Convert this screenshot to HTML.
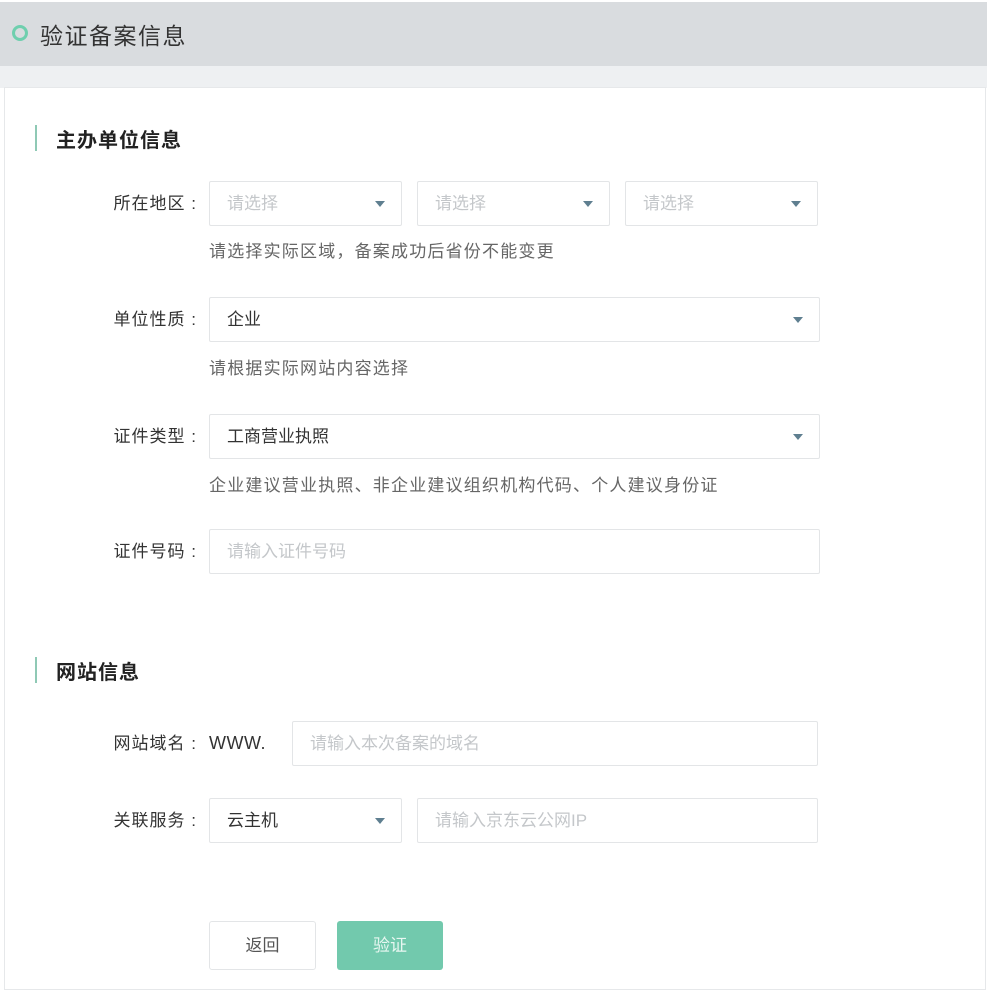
<!DOCTYPE html>
<html><head><meta charset="utf-8"><style>
*{margin:0;padding:0;box-sizing:border-box}
body{width:988px;height:996px;background:#fff;position:relative;overflow:hidden;font-family:"Liberation Sans","Noto Sans CJK SC",sans-serif;color:#333}
.a{position:absolute}
.hdr{left:0;top:2px;width:987px;height:64px;background:#d9dcdf}
.band{left:0;top:66px;width:987px;height:22px;background:#eef0f2}
.card{left:4px;top:87px;width:982px;height:903px;background:#fff;border:1px solid #e6e8ea}
.lbl{font-size:17px;color:#333;width:122px;text-align:right;line-height:45px;height:45px;letter-spacing:1px}
.box{border:1px solid #e3e5e7;background:#fff;height:45px;border-radius:2px;font-size:17px;line-height:43px;padding-left:17px}
.ph{color:#c4c7ca}
.tri{position:absolute;right:16px;top:19px;width:0;height:0;border-left:5px solid transparent;border-right:5px solid transparent;border-top:6px solid #5f7f90}
.hint{font-size:17px;color:#666;letter-spacing:1.2px}
.sec{font-size:20px;font-weight:bold;color:#222;letter-spacing:1px}
.bar{width:2px;height:26px;background:#8fc9b5}
</style></head><body>
<div class="a hdr"></div>
<div class="a band"></div>
<div class="a card"></div>
<div class="a" style="left:12px;top:25px;width:16px;height:16px;border:3px solid #6fcfae;border-radius:50%"></div>
<div class="a" style="left:40px;top:17px;font-size:23px;color:#333;letter-spacing:1.5px">验证备案信息</div>

<div class="a bar" style="left:35px;top:125px"></div>
<div class="a sec" style="left:56px;top:124px">主办单位信息</div>

<div class="a lbl" style="left:75px;top:181px">所在地区 :</div>
<div class="a box" style="left:209px;top:181px;width:193px"><span class="ph">请选择</span><i class="tri"></i></div>
<div class="a box" style="left:417px;top:181px;width:193px"><span class="ph">请选择</span><i class="tri"></i></div>
<div class="a box" style="left:625px;top:181px;width:193px"><span class="ph">请选择</span><i class="tri"></i></div>
<div class="a hint" style="left:209px;top:237px">请选择实际区域，备案成功后省份不能变更</div>

<div class="a lbl" style="left:75px;top:297px">单位性质 :</div>
<div class="a box" style="left:209px;top:297px;width:611px">企业<i class="tri"></i></div>
<div class="a hint" style="left:209px;top:354px">请根据实际网站内容选择</div>

<div class="a lbl" style="left:75px;top:414px">证件类型 :</div>
<div class="a box" style="left:209px;top:414px;width:611px">工商营业执照<i class="tri"></i></div>
<div class="a hint" style="left:209px;top:471px">企业建议营业执照、非企业建议组织机构代码、个人建议身份证</div>

<div class="a lbl" style="left:75px;top:529px">证件号码 :</div>
<div class="a box" style="left:209px;top:529px;width:611px"><span class="ph">请输入证件号码</span></div>

<div class="a bar" style="left:35px;top:657px"></div>
<div class="a sec" style="left:56px;top:656px">网站信息</div>

<div class="a lbl" style="left:75px;top:721px">网站域名 :</div>
<div class="a" style="left:209px;top:721px;font-size:18px;line-height:45px;color:#333;letter-spacing:.5px">WWW.</div>
<div class="a box" style="left:292px;top:721px;width:526px"><span class="ph">请输入本次备案的域名</span></div>

<div class="a lbl" style="left:75px;top:798px">关联服务 :</div>
<div class="a box" style="left:209px;top:798px;width:193px">云主机<i class="tri"></i></div>
<div class="a box" style="left:417px;top:798px;width:401px"><span class="ph">请输入京东云公网IP</span></div>

<div class="a" style="left:209px;top:921px;width:107px;height:49px;border:1px solid #e3e5e7;border-radius:3px;text-align:center;line-height:47px;font-size:17px;color:#555">返回</div>
<div class="a" style="left:337px;top:921px;width:106px;height:49px;background:#72c9ad;border-radius:3px;text-align:center;line-height:49px;font-size:17px;color:#e8f7f1">验证</div>
</body></html>
